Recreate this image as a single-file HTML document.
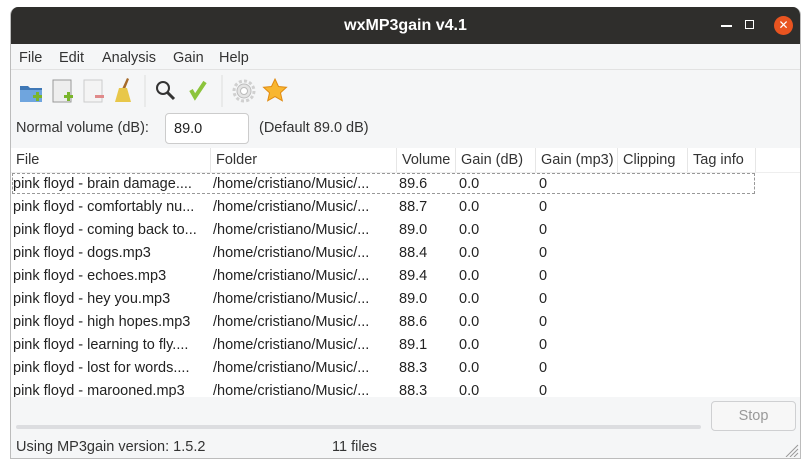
<!DOCTYPE html>
<html><head><meta charset="utf-8"><style>
*{margin:0;padding:0;box-sizing:border-box}
body{width:810px;height:468px;background:#fff;position:relative;overflow:hidden;font-family:"Liberation Sans",sans-serif;font-size:14.5px;color:#333}
.a{position:absolute;white-space:nowrap}
#win{position:absolute;left:10px;top:7px;width:791px;height:452px;background:#f5f6f7;border:1px solid #bcbcbc;border-top:none;border-radius:8px 8px 0 0;overflow:hidden}
#title{position:absolute;left:0;top:0;width:100%;height:37px;background:#2f2e2c;color:#fff;font-weight:bold;font-size:16px;text-align:center;line-height:37px}
.menu span{position:absolute;top:43px}
#table{position:absolute;left:0;top:141px;width:791px;height:249px;background:#fff;overflow:hidden}
.hd{position:absolute;top:0;height:24px;line-height:24px;border-right:1px solid #e6e6e6;padding-left:5px;color:#333}
.row{position:absolute;left:0;width:791px;height:23px;line-height:23px;color:#222}
.row span{position:absolute}
</style></head><body>
<div id="win">
<div id="title">wxMP3gain v4.1
<div class="a" style="left:710px;top:18px;width:11px;height:2px;background:#fff"></div>
<div class="a" style="left:734px;top:13px;width:9px;height:9px;border:1.5px solid #fff"></div>
<div class="a" style="left:763px;top:9px;width:19px;height:19px;border-radius:50%;background:#e95420;color:#fff;font-size:12px;line-height:19px;text-align:center;font-weight:normal">✕</div>
</div>
<div class="menu"><span style="left:8px">File</span><span style="left:48px">Edit</span><span style="left:91px">Analysis</span><span style="left:162px">Gain</span><span style="left:208px">Help</span></div>
<div class="a" style="left:0;top:62px;width:100%;height:1px;background:#e2e2e2"></div>
<svg class="a" style="left:0;top:63px" width="300" height="40">
<path d="M9 16h8l2 2h12v14H9z" fill="#3f78b6"/><path d="M9 20h22v12H9z" fill="#6fa5de"/>
<rect x="22" y="25" width="9" height="3" fill="#7ab52c"/><rect x="25" y="22" width="3" height="9" fill="#7ab52c"/>
<rect x="42" y="10" width="18" height="22" fill="#eee" stroke="#999"/>
<rect x="53" y="25" width="9" height="3" fill="#7ab52c"/><rect x="56" y="22" width="3" height="9" fill="#7ab52c"/>
<rect x="73" y="10" width="18" height="22" fill="#f4f4f4" stroke="#ccc"/>
<rect x="84" y="25" width="9" height="3" fill="#e08a8a"/>
<path d="M116 8l2 1-4 10h-3z" fill="#a66a2a"/><path d="M108 18h8l4 14h-16z" fill="#e8c74a"/>
<line x1="134" y1="5" x2="134" y2="37" stroke="#ddd"/>
<circle cx="152" cy="18" r="6" fill="none" stroke="#333" stroke-width="2"/><line x1="156" y1="22" x2="163" y2="29" stroke="#333" stroke-width="3"/>
<path d="M180 20l4 7 10-15" fill="none" stroke="#8cc43c" stroke-width="4"/>
<line x1="211" y1="5" x2="211" y2="37" stroke="#ddd"/>
<circle cx="233" cy="21" r="10" fill="none" stroke="#d0d0d0" stroke-width="3" stroke-dasharray="3 2.2"/><circle cx="233" cy="21" r="7" fill="#e4e4e4" stroke="#bdbdbd" stroke-width="1"/><circle cx="233" cy="21" r="3.5" fill="#fff" stroke="#bbb"/>
<path d="M264 9l3.5 7.5 8 .8-6 5.5 1.8 8-7.3-4.2-7.3 4.2 1.8-8-6-5.5 8-.8z" fill="#f8b630" stroke="#e08a10"/>
</svg>
<div class="a" style="left:5px;top:113px">Normal volume (dB):</div>
<div class="a" style="left:154px;top:106px;width:84px;height:31px;background:#fff;border:1px solid #ccc;border-radius:4px;padding:7px 8px;color:#222">89.0</div>
<div class="a" style="left:248px;top:113px">(Default 89.0 dB)</div>
<div id="table">
<div class="hd" style="left:0;width:200px">File</div>
<div class="hd" style="left:200px;width:186px">Folder</div>
<div class="hd" style="left:386px;width:59px">Volume</div>
<div class="hd" style="left:445px;width:80px">Gain (dB)</div>
<div class="hd" style="left:525px;width:82px">Gain (mp3)</div>
<div class="hd" style="left:607px;width:70px">Clipping</div>
<div class="hd" style="left:677px;width:68px">Tag info</div>
<div class="a" style="left:0;top:24px;width:791px;height:1px;background:#eee"></div>
<div class="a" style="left:1px;top:25px;width:743px;height:21px;border:1px dashed #999"></div>
<div class="row" style="top:25px"><span style="left:2px">pink floyd - brain damage....</span><span style="left:202px">/home/cristiano/Music/...</span><span style="left:388px">89.6</span><span style="left:448px">0.0</span><span style="left:528px">0</span></div>
<div class="row" style="top:48px"><span style="left:2px">pink floyd - comfortably nu...</span><span style="left:202px">/home/cristiano/Music/...</span><span style="left:388px">88.7</span><span style="left:448px">0.0</span><span style="left:528px">0</span></div>
<div class="row" style="top:71px"><span style="left:2px">pink floyd - coming back to...</span><span style="left:202px">/home/cristiano/Music/...</span><span style="left:388px">89.0</span><span style="left:448px">0.0</span><span style="left:528px">0</span></div>
<div class="row" style="top:94px"><span style="left:2px">pink floyd - dogs.mp3</span><span style="left:202px">/home/cristiano/Music/...</span><span style="left:388px">88.4</span><span style="left:448px">0.0</span><span style="left:528px">0</span></div>
<div class="row" style="top:117px"><span style="left:2px">pink floyd - echoes.mp3</span><span style="left:202px">/home/cristiano/Music/...</span><span style="left:388px">89.4</span><span style="left:448px">0.0</span><span style="left:528px">0</span></div>
<div class="row" style="top:140px"><span style="left:2px">pink floyd - hey you.mp3</span><span style="left:202px">/home/cristiano/Music/...</span><span style="left:388px">89.0</span><span style="left:448px">0.0</span><span style="left:528px">0</span></div>
<div class="row" style="top:163px"><span style="left:2px">pink floyd - high hopes.mp3</span><span style="left:202px">/home/cristiano/Music/...</span><span style="left:388px">88.6</span><span style="left:448px">0.0</span><span style="left:528px">0</span></div>
<div class="row" style="top:186px"><span style="left:2px">pink floyd - learning to fly....</span><span style="left:202px">/home/cristiano/Music/...</span><span style="left:388px">89.1</span><span style="left:448px">0.0</span><span style="left:528px">0</span></div>
<div class="row" style="top:209px"><span style="left:2px">pink floyd - lost for words....</span><span style="left:202px">/home/cristiano/Music/...</span><span style="left:388px">88.3</span><span style="left:448px">0.0</span><span style="left:528px">0</span></div>
<div class="row" style="top:232px"><span style="left:2px">pink floyd - marooned.mp3</span><span style="left:202px">/home/cristiano/Music/...</span><span style="left:388px">88.3</span><span style="left:448px">0.0</span><span style="left:528px">0</span></div>
</div>
<div class="a" style="left:5px;top:418px;width:685px;height:4px;background:#dcdde0;border-radius:2px"></div>
<div class="a" style="left:700px;top:394px;width:85px;height:30px;border:1px solid #cfd0d2;border-radius:4px;background:#f7f7f7;color:#999;text-align:center;line-height:28px">Stop</div>
<div class="a" style="left:5px;top:432px">Using MP3gain version: 1.5.2</div>
<div class="a" style="left:321px;top:432px">11 files</div>
<svg class="a" style="left:772px;top:436px" width="16" height="14"><path d="M3 14L15 2M7 14L15 6M11 14L15 10" stroke="#999" stroke-width="1"/></svg>
</div>
</body></html>
